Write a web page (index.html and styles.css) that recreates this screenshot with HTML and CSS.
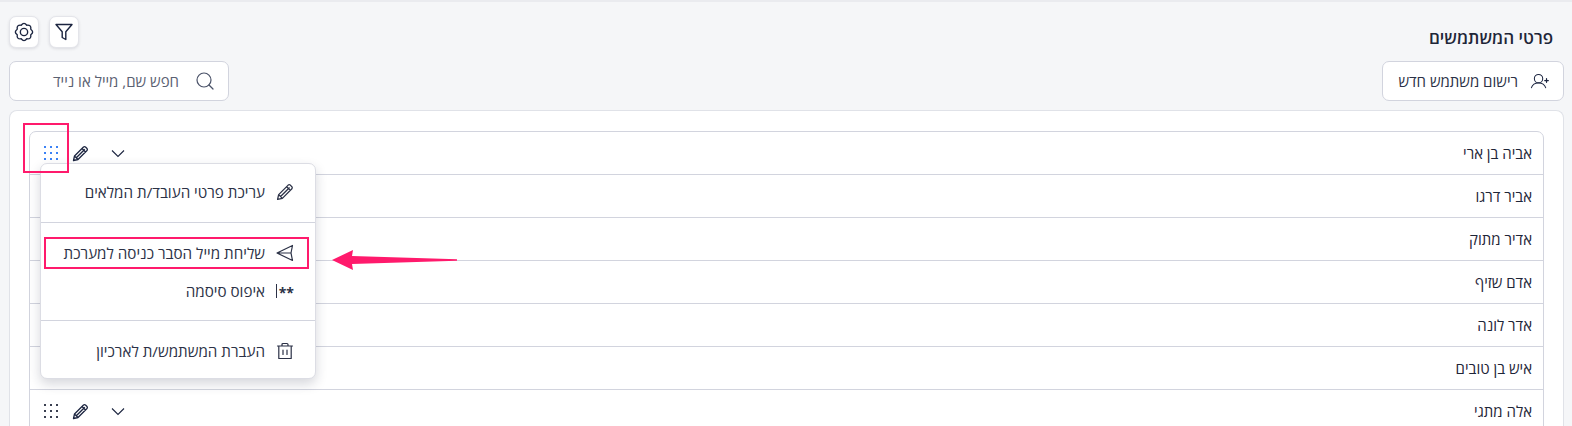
FILE: index.html
```html
<!DOCTYPE html>
<html lang="he" dir="rtl">
<head>
<meta charset="utf-8">
<title>פרטי המשתמשים</title>
<link rel="stylesheet" href="styles.css">
</head>
<body>
<main class="page">
  <div class="top-row">
    <h1 class="title">פרטי המשתמשים</h1>
    <div class="tool-buttons">
      <button class="icon-btn" aria-label="סינון">
        <svg width="20" height="20" viewBox="0 0 20 20" fill="none" stroke="#1c2540" stroke-width="1.4" stroke-linejoin="round"><path d="M2 2.500h16l-6.200 7.300v7.700l-3.600-2v-5.700z"/></svg>
      </button>
      <button class="icon-btn" aria-label="הגדרות">
        <svg width="22" height="22" viewBox="0 0 24 24" fill="none" stroke="#1c2540" stroke-width="1.500" stroke-linejoin="round"><circle cx="12" cy="12" r="4"/><path d="M19.390 8.940Q23.500 12 19.390 15.060Q20.130 20.130 15.060 19.390Q12 23.500 8.940 19.390Q3.870 20.130 4.610 15.060Q.5 12 4.610 8.940Q3.870 3.870 8.940 4.610Q12 .5 15.060 4.610Q20.130 3.870 19.390 8.940Z"/></svg>
      </button>
    </div>
  </div>
  <div class="action-row">
    <button class="new-user">
      <svg width="19" height="16" viewBox="0 0 20 16" fill="none" stroke="#1c2540" stroke-width="1.1" stroke-linecap="round"><circle cx="9" cy="5.500" r="4.400"/><path d="M1.500 15c1-3.200 3.600-5 7.500-5s6.500 1.800 7.500 5"/><path d="M15.500 7.500h3.800M17.400 5.600v3.800" stroke-width="1.300"/></svg>
      <span>רישום משתמש חדש</span>
    </button>
    <label class="search">
      <svg width="18" height="18" viewBox="0 0 18 18" fill="none" stroke="#4a5268" stroke-width="1.2" stroke-linecap="round"><circle cx="8" cy="8" r="7"/><path d="M13 13l4 4"/></svg>
      <span class="search-text">חפש שם, מייל או נייד</span>
    </label>
  </div>
  <section class="card">
    <ul class="list">
      <li class="row"><span class="name">אביה בן ארי</span>
        <span class="row-tools">
          <svg class="chev" width="16" height="9" viewBox="0 0 16 9" fill="none" stroke="#1c2540" stroke-width="1.100"><path d="M2 1.500l6 6 6-6"/></svg>
          <svg class="pencil" width="17" height="17" viewBox="0 0 17 17" fill="none" stroke="#1c2540" stroke-width="1.300" stroke-linejoin="round"><path d="M1.500 15.500L2.500 11L11.500 2Q12.500 1.200 13.500 2L15 3.500Q15.800 4.500 15 5.500L6 14.500ZM4.300 12.700L12.800 4.200M2.500 11L6 14.500M10 3.500L13.500 7"/></svg>
          <svg class="dots dots-active" width="14" height="14" viewBox="0 0 14 14"><g><rect x="0" y="0" width="2" height="2"/><rect x="6" y="0" width="2" height="2"/><rect x="12" y="0" width="2" height="2"/><rect x="0" y="6" width="2" height="2"/><rect x="6" y="6" width="2" height="2"/><rect x="12" y="6" width="2" height="2"/><rect x="0" y="12" width="2" height="2"/><rect x="6" y="12" width="2" height="2"/><rect x="12" y="12" width="2" height="2"/></g></svg>
        </span>
      </li>
      <li class="row"><span class="name">אביר דרגו</span></li>
      <li class="row"><span class="name">אדיר מתוק</span></li>
      <li class="row"><span class="name">אדם שזיף</span></li>
      <li class="row"><span class="name">אדר לונה</span></li>
      <li class="row"><span class="name">איש בן טובים</span></li>
      <li class="row"><span class="name">אלה מתגי</span>
        <span class="row-tools">
          <svg class="chev" width="16" height="9" viewBox="0 0 16 9" fill="none" stroke="#1c2540" stroke-width="1.100"><path d="M2 1.500l6 6 6-6"/></svg>
          <svg class="pencil" width="17" height="17" viewBox="0 0 17 17" fill="none" stroke="#1c2540" stroke-width="1.300" stroke-linejoin="round"><path d="M1.500 15.500L2.500 11L11.500 2Q12.500 1.200 13.500 2L15 3.500Q15.800 4.500 15 5.500L6 14.500ZM4.300 12.700L12.800 4.200M2.500 11L6 14.500M10 3.500L13.500 7"/></svg>
          <svg class="dots" width="14" height="14" viewBox="0 0 14 14"><g><rect x="0" y="0" width="2" height="2"/><rect x="6" y="0" width="2" height="2"/><rect x="12" y="0" width="2" height="2"/><rect x="0" y="6" width="2" height="2"/><rect x="6" y="6" width="2" height="2"/><rect x="12" y="6" width="2" height="2"/><rect x="0" y="12" width="2" height="2"/><rect x="6" y="12" width="2" height="2"/><rect x="12" y="12" width="2" height="2"/></g></svg>
        </span>
      </li>
    </ul>
  </section>
</main>

<div class="menu">
  <div class="menu-group group-a">
    <div class="menu-item">
      <svg width="18" height="18" viewBox="0 0 17 17" fill="none" stroke="#2b3146" stroke-width="1.200" stroke-linejoin="round"><path d="M1.500 15.500L2.500 11L11.500 2Q12.500 1.200 13.500 2L15 3.500Q15.800 4.500 15 5.500L6 14.500ZM4.300 12.700L12.800 4.200M2.500 11L6 14.500M10 3.500L13.500 7"/></svg>
      <span>עריכת פרטי העובד/ת המלאים</span>
    </div>
  </div>
  <div class="menu-group group-b">
    <div class="menu-item item-send">
      <svg width="18" height="18" viewBox="0 0 18 18" fill="none" stroke="#2b3146" stroke-width="1.200" stroke-linejoin="round"><path d="M1 9L16.500 1.500L15 9L16.500 16.500ZM1 9H15"/></svg>
      <span>שליחת מייל הסבר כניסה למערכת</span>
    </div>
    <div class="menu-item item-reset">
      <span class="reset-icon"><i class="stars">**</i><i class="bar"></i></span>
      <span>איפוס סיסמה</span>
    </div>
  </div>
  <div class="menu-group group-c">
    <div class="menu-item">
      <svg width="18" height="18" viewBox="0 0 18 18" fill="none" stroke="#2b3146" stroke-width="1.200" stroke-linejoin="round" stroke-linecap="round"><path d="M1.500 4h15M6 4V2.500Q6 1.500 7 1.500h4Q12 1.500 12 2.500V4M2.800 4v12.500h12.400V4M7 8v4.500M11 8v4.500"/></svg>
      <span>העברת המשתמש/ת לארכיון</span>
    </div>
  </div>
</div>

<div class="mark mark-dots"></div>
<div class="mark mark-send"></div>
<svg class="arrow" width="126" height="22" viewBox="0 0 126 22"><path fill="#ff1a6c" d="M0 11L21 1l-1 6 105 3.300v1.400L20 15l1 6z"/></svg>
</body>
</html>
```
FILE: styles.css
```css
* { box-sizing: border-box; }
html, body { margin: 0; height: 100%; }
body {
  width: 1572px;
  height: 426px;
  overflow: hidden;
  background: #f5f6f8;
  color: #1f2638;
  font-family: "Open Sans", "Liberation Sans", sans-serif;
  font-size: 15px;
  position: relative;
}
.page {
  height: 426px;
  border-top: 2px solid #eaebef;
  padding: 14px 8px 0 9px;
  display: flex;
  flex-direction: column;
}
.top-row {
  flex: none;
  height: 32px;
  display: flex;
  align-items: flex-start;
  justify-content: space-between;
}
.title {
  margin: 12px 0 0 0;
  padding-right: 11px;
  font-size: 17px;
  font-weight: 600;
  line-height: 20px;
  color: #1f2638;
}
.tool-buttons { display: flex; gap: 10px; }
.icon-btn {
  width: 30px;
  height: 32px;
  padding: 0;
  border: 1px solid #e4e5ea;
  border-radius: 7px;
  background: #fff;
  box-shadow: 0 1px 3px rgba(30, 35, 60, .12);
  display: flex;
  align-items: center;
  justify-content: center;
}
.action-row {
  flex: none;
  margin-top: 13px;
  height: 40px;
  display: flex;
  justify-content: space-between;
}
.new-user, .search {
  height: 40px;
  border: 1px solid #d2d4de;
  border-radius: 7px;
  background: #fff;
  display: flex;
  align-items: center;
  font: inherit;
  color: #2b3146;
}
.new-user { width: 182px; padding: 0 14px; gap: 12px; }
.search { width: 220px; padding: 0 14px; gap: 17px; }
.search-text { color: #5b6172; }
.card {
  margin-top: 9px;
  flex: 1;
  min-height: 0;
  overflow: hidden;
  background: #fff;
  border: 1px solid #e0e2e8;
  border-bottom: 0;
  border-radius: 8px 8px 0 0;
  padding: 20px 19px 0 19px;
}
.list {
  list-style: none;
  margin: 0;
  padding: 0;
  border: 1px solid #d2d4de;
  border-radius: 7px;
}
.row {
  height: 43px;
  padding: 0 11px 0 14px;
  border-bottom: 1px solid #d2d4de;
  display: flex;
  align-items: center;
  justify-content: space-between;
}
.row-tools {
  display: flex;
  align-items: center;
}
.chev { margin-left: 21px; }
.pencil { margin-left: 14px; }
.dots { fill: #3a3f50; }
.dots-active { fill: #3b82f6; }
.name { font-weight: 500; font-size: 15px; }

.menu {
  position: absolute;
  left: 40px;
  top: 163px;
  width: 276px;
  height: 216px;
  background: #fff;
  border: 1px solid #dcdde4;
  border-radius: 7px;
  box-shadow: 0 5px 12px rgba(30, 35, 60, .18);
}
.menu-group { display: flex; flex-direction: column; }
.group-a { height: 59px; padding-top: 8px; border-bottom: 1px solid #d2d4de; }
.group-b { height: 98px; padding-top: 15px; border-bottom: 1px solid #d2d4de; }
.group-c { padding-top: 10px; }
.menu-item {
  height: 40px;
  padding: 0 21px 0 0;
  display: flex;
  align-items: center;
  gap: 11px;
  font-size: 15.200px;
  color: #2b3146;
}
.item-send { height: 30px; }
.item-reset { height: 46px; }
.reset-icon {
  width: 18px;
  display: flex;
  align-items: center;
  justify-content: center;
  gap: 2px;
}
.stars { font-style: normal; font-size: 14px; line-height: 14px; color: #2b3146; font-weight: 700; height: 11px; }
.bar { width: 1.500px; height: 14px; background: #2b3146; }

.mark {
  position: absolute;
  border: 2px solid #ff1a6c;
}
.mark-dots { left: 23px; top: 123px; width: 46px; height: 50px; }
.mark-send { left: 44px; top: 237px; width: 265px; height: 32px; }
.arrow { position: absolute; left: 332px; top: 249px; }
```
